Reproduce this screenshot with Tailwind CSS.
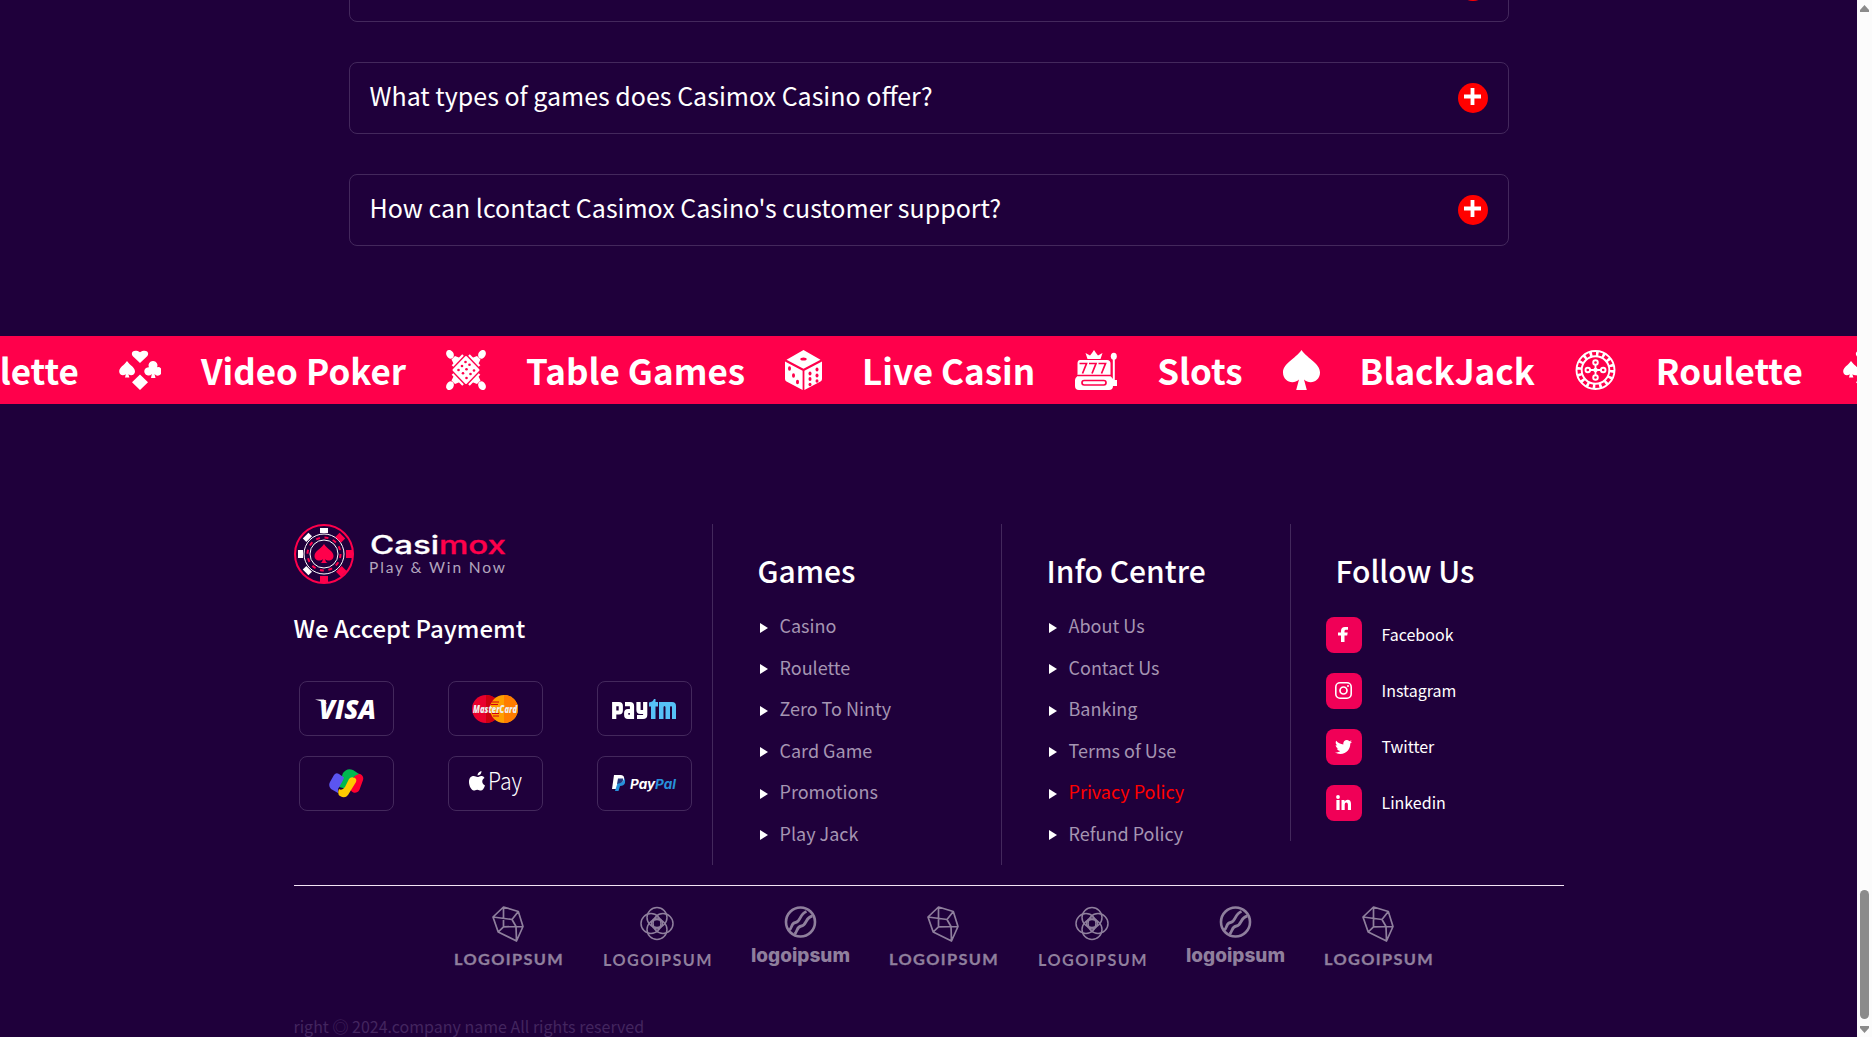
<!DOCTYPE html>
<html lang="en"><head><meta charset="utf-8"><title>Casimox</title>
<script src="https://cdn.jsdelivr.net/npm/@tailwindcss/browser@4"></script></head>
<body class="h-[1037px] w-[1872px] overflow-hidden bg-[#1f003b] font-['Noto_Sans_CJK_JP',sans-serif] text-white">

<svg class="hidden" aria-hidden="true">
  <symbol id="cards" viewBox="0 0 42 40">
    <path d="M21 13 13.600 6C11 2 15.500-1.500 21 2.200 26.500-1.500 31 2 28.400 6ZM21 24.500 29 32.300 21 40 13 32.300ZM8 11C5 15.500.2 17.200.2 21.500.2 25 4 26.500 6.800 24.200L6 27.500H10.400L9.400 24.200C12 26.500 16 25 16 21.500 16 17.200 11 15.500 8 11ZM34 11a4.300 4.300 0 0 0-4 6.200A4.200 4.200 0 1 0 32.800 24L32 28H36.500L35.500 24A4.200 4.200 0 1 0 38 17.200 4.300 4.300 0 0 0 34 11Z"/>
  </symbol>
  <symbol id="tablegames" viewBox="0 0 40 40">
    <path d="M20 7 32.500 20 20 33 7.500 20Z" stroke="#fff" stroke-width="2" stroke-linejoin="round"/>
    <g id="tg"><ellipse cx="4" cy="4.300" rx="3.600" ry="4.600" transform="rotate(-30 4 4.300)"/><path d="m5.500 9.500 3.500-3.500 5 2-6 6.500Z"/><path d="M17 5 6.500 16" stroke="#fff" stroke-width="2.200" fill="none"/></g>
    <use href="#tg" transform="matrix(-1 0 0 1 40 0)"/><use href="#tg" transform="matrix(1 0 0 -1 0 40)"/><use href="#tg" transform="rotate(180 20 20)"/>
    <g fill="#ff004b"><circle cx="19.500" cy="12" r="1.300"/><circle cx="23.500" cy="14.800" r="1.300"/><circle cx="16" cy="16" r="1.300"/><circle cx="20.500" cy="19.200" r="1.300"/><circle cx="12.500" cy="20" r="1.300"/><circle cx="17" cy="23.200" r="1.300"/><circle cx="28" cy="20.500" r="1.300"/><circle cx="24.500" cy="24" r="1.300"/><circle cx="20.500" cy="28" r="1.300"/></g>
  </symbol>
  <symbol id="dice" viewBox="0 0 37 40">
    <path d="M18.500 0 35.500 9.700 18.500 18.800 1.500 9.700ZM0 11.500 17.600 20.800V40L1.500 31.500Q0 30.500 0 29ZM37 11.500 19.400 20.800V40L35.500 31.500Q37 30.500 37 29Z"/>
    <g fill="#ff004b"><ellipse cx="18.500" cy="9" rx="3.200" ry="1.600"/><ellipse cx="4.500" cy="18.500" rx="1.500" ry="2.200"/><ellipse cx="8.500" cy="25.500" rx="1.500" ry="2.200"/><ellipse cx="12.500" cy="32" rx="1.500" ry="2.200"/><ellipse cx="25" cy="23.500" rx="1.500" ry="2"/><ellipse cx="32" cy="19.500" rx="1.500" ry="2"/><ellipse cx="25" cy="29" rx="1.500" ry="2"/><ellipse cx="32" cy="25.500" rx="1.500" ry="2"/><ellipse cx="25" cy="34.500" rx="1.500" ry="1.800"/><ellipse cx="32" cy="31" rx="1.500" ry="1.800"/></g>
  </symbol>
  <symbol id="slot" viewBox="0 0 42 40">
    <path d="M10.500 3 15 5.500 17 3 19 0 21 3 23 5.500 27.500 3 25.500 9H12.500ZM5 10H32Q35.500 10 35.500 13.500V25H2.500V13.500Q2.500 10 5 10ZM2.500 26H35.500L38 29V30H42V36H38Q38 40 34 40H4Q0 40 0 36V30Q0 28 2.500 26Z"/>
    <ellipse cx="38.800" cy="6.200" rx="3" ry="3.500"/><path d="M37.800 9H39.800V31H37.800Z"/>
    <g fill="none" stroke="#ff004b" stroke-width="1.700"><path d="M4.500 13.500H11.500L7.500 23.500M14 13.500H21L17 23.500M23.500 13.500H30.500L26.500 23.500M2.500 25.500H36"/><rect x="7" y="30.500" width="24" height="4.500" rx="2.200"/></g>
  </symbol>
  <symbol id="spade" viewBox="0 0 37 40"><path d="M18.500 0C12 9 0 13.500 0 22.500 0 31.500 10 35 16 29.500L13.200 40H23.800L21 29.500C27 35 37 31.500 37 22.500 37 13.500 25 9 18.500 0Z"/></symbol>
  <symbol id="wheel" viewBox="0 0 41 40">
    <g fill="none" stroke="#fff"><circle cx="20.500" cy="20" r="19" stroke-width="1.900"/><circle cx="20.500" cy="20" r="13.800" stroke-width="1.900"/><circle cx="20.500" cy="20" r="16.500" stroke-width="5" stroke-dasharray="2.600 3.880"/><path d="M20.500 14V26M14.500 20H26.500" stroke-width="1.800"/><g stroke-width="1.900"><circle cx="20.500" cy="12.500" r="2.300"/><circle cx="20.500" cy="27.500" r="2.300"/><circle cx="12.800" cy="20" r="2.300"/><circle cx="28.200" cy="20" r="2.300"/></g></g><circle cx="20.500" cy="20" r="2.200"/>
  </symbol>
  <symbol id="gem" viewBox="0 0 32 36"><path d="M11.500 1 26.300 5.500 31 20.500 24.500 35 6.200 26 1 11ZM11.500 1V20.800L6.200 26M1 11 20 13.500 26.300 5.500M20 13.500 24 20.500M11.500 20.800 31 20.500M24 20.500 24.500 35" fill="none" stroke="currentColor" stroke-width="1.700" stroke-linejoin="round"/></symbol>
  <symbol id="rings" viewBox="0 0 34 34"><g fill="none" stroke="currentColor" stroke-width="1.500"><circle cx="17" cy="11" r="10"/><circle cx="17" cy="23" r="10"/><circle cx="11" cy="17" r="10"/><circle cx="23" cy="17" r="10"/><circle cx="17" cy="17" r="5.500"/></g></symbol>
  <symbol id="globe" viewBox="0 0 32 32"><g fill="none" stroke="currentColor"><circle cx="16" cy="16" r="14.500" stroke-width="2.600"/><path d="M4.500 24C8 23 6 17 11 16.500S15 8 22 5.500M10 28C13 26 12 20.500 17 20S21 11 28 10" stroke-width="2.800"/></g></symbol>
</svg>

<div class="flex h-full">
<main class="flex h-full w-[1857px] shrink-0 flex-col overflow-hidden">

  <section class="mx-auto -mt-[50px] flex w-[1160px] shrink-0 flex-col gap-10 text-[25px] leading-[36px]">
    <div class="flex h-[72px] items-center justify-end rounded-lg border border-[#43285c] px-5"><span class="size-[30px] rounded-full bg-[#f00]"></span></div>
    <div class="flex h-[72px] items-center justify-between rounded-lg border border-[#43285c] px-5"><h3 class="-mt-1.5">What types of games does Casimox Casino offer?</h3><span class="flex size-[30px] justify-center rounded-full bg-[#f00] pt-[5px]"><svg class="size-[17px]" viewBox="0 0 17 17"><path d="M8.500 0V17M0 8.500H17" stroke="#fff" stroke-width="3.800"/></svg></span></div>
    <div class="flex h-[72px] items-center justify-between rounded-lg border border-[#43285c] px-5"><h3 class="-mt-1.5">How can lcontact Casimox Casino's customer support?</h3><span class="flex size-[30px] justify-center rounded-full bg-[#f00] pt-[5px]"><svg class="size-[17px]" viewBox="0 0 17 17"><path d="M8.500 0V17M0 8.500H17" stroke="#fff" stroke-width="3.800"/></svg></span></div>
  </section>

  <section class="mt-[90px] h-[68px] shrink-0 overflow-hidden bg-[#ff004b]">
    <div class="-ml-[68px] flex h-full w-max items-center gap-10 fill-white text-[35px] leading-[68px] font-bold">
      <span>Roulette</span><svg class="h-10 w-[42px]"><use href="#cards"/></svg>
      <span>Video Poker</span><svg class="size-10"><use href="#tablegames"/></svg>
      <span>Table Games</span><svg class="h-10 w-[37px]"><use href="#dice"/></svg>
      <span>Live Casin</span><svg class="h-10 w-[42px]"><use href="#slot"/></svg>
      <span>Slots</span><svg class="h-10 w-[37px]"><use href="#spade"/></svg>
      <span>BlackJack</span><svg class="h-10 w-[41px]"><use href="#wheel"/></svg>
      <span>Roulette</span><svg class="h-10 w-[42px]"><use href="#cards"/></svg>
    </div>
  </section>

  <footer class="mx-auto mt-[120px] w-[1270px] shrink-0">
    <div class="flex h-[341px] items-start">
      <div class="h-[341px] w-[419px] border-r border-[#43285c]">
        <div class="flex items-center gap-[15px]">
          <svg class="size-[60px]" viewBox="0 0 60 60"><g fill="none"><circle cx="30" cy="30" r="29" stroke="#ff004b" stroke-width="2"/><circle cx="30" cy="30" r="20" stroke="#fff"/><circle cx="30" cy="30" r="16.500" stroke="#ff004b" stroke-width="2" stroke-dasharray="4 4.640"/><circle cx="30" cy="30" r="14" stroke="#fff"/></g>
            <g fill="#fff"><path d="M26 4h8v5h-8zM4 26h5v8h-5z"/><path d="M26 4h8v5h-8z" transform="rotate(-45 30 30)"/><path d="M26 4h8v5h-8z" transform="rotate(-135 30 30)"/></g>
            <g fill="#ff004b"><path d="M26 4h8v6h-8z" transform="rotate(45 30 30)"/><path d="M26 1h8v7h-8z" transform="rotate(90 30 30)"/><path d="M26 2h8v7h-8z" transform="rotate(135 30 30)"/><path d="M26 1h8v7h-8z" transform="rotate(180 30 30)"/><path d="M30 20C27 25 20.500 27 20.500 32 20.500 36.500 26 38 29 35L28 38 26.500 39H33.500L32 38 31 35C34 38 39.500 36.500 39.500 32 39.500 27 33 25 30 20Z"/></g></svg>
          <svg class="h-[60px] w-[140px] overflow-visible" font-family="Inter, sans-serif"><text x="1" y="29.500" font-size="25" font-weight="500" fill="#fff" stroke="#fff" stroke-width=".3" textLength="136" lengthAdjust="spacingAndGlyphs">Casi<tspan fill="#ff004b" stroke="#ff004b">mox</tspan></text><text x="0" y="49" font-family="Lato, sans-serif" font-size="15.500" fill="#b3a6be" textLength="136">Play &amp; Win Now</text></svg>
        </div>
        <h4 class="mt-[26px] text-[24px] leading-[36px] font-medium">We Accept Paymemt</h4>
        <div class="mt-[35px] ml-[5px] grid w-max grid-cols-[95px_95px_95px] gap-x-[54px] gap-y-5">
          <div class="flex h-[55px] items-center justify-center rounded-lg border border-[#43285c]"><svg class="h-5 w-[62px] overflow-visible" viewBox="0 0 62 20" font-family="Open Sans, sans-serif"><text x="4" y="19.500" font-size="26" font-weight="800" font-style="italic" fill="#fff" textLength="57" lengthAdjust="spacingAndGlyphs">VISA</text><path d="M0 .5H9L12 5 8 3Z" fill="#fff"/></svg></div>
          <div class="flex h-[55px] items-center justify-center rounded-lg border border-[#43285c]"><svg class="h-7 w-[46px]" viewBox="0 0 46 28"><circle cx="14" cy="14" r="14" fill="#e9002c"/><path d="M14 0A14 14 0 0 1 14 28Z" fill="#cc0010"/><circle cx="32" cy="14" r="14" fill="#ff9f00"/><path d="M32 0A14 14 0 0 1 32 28Z" fill="#ff7d00"/><path d="M20 7H27M19 9.500H26M20 18.500H27M21 21H27" stroke="#d20011"/><text x="1" y="18" font-family="Open Sans, sans-serif" font-size="10" font-weight="800" font-style="italic" fill="#eee" textLength="44" lengthAdjust="spacingAndGlyphs">MasterCard</text></svg></div>
          <div class="flex h-[55px] items-center justify-center rounded-lg border border-[#43285c]"><svg class="h-5 w-16 overflow-visible" viewBox="0 0 64 20"><g fill="none" stroke="#fff" stroke-width="4.200"><path d="M2.200 20V5.200H7Q8.800 5.200 8.800 7V11.500Q8.800 13.500 7 13.500H3"/><path d="M13 5.200H18Q20 5.200 20 7V17.800H16Q14.200 17.800 14.200 16V14Q14.200 12 16 12H20"/><path d="M26.500 3V11Q26.500 13 28.500 13H33M33.200 3V16Q33.200 18 31 18H25"/></g><path d="M37 3.500Q41 3 42 0H43.500V3H46V7.500H43.500V20H39V7.500H37ZM47 3H60Q64 3 64 7V20H60V8.500Q60 7 59 7T58 8.500V20H53.500V8.500Q53.500 7 52.500 7T51.500 8.500V20H47Z" fill="#56c1f7"/></svg></div>
          <div class="flex h-[55px] items-center justify-center rounded-lg border border-[#43285c]"><svg class="h-[29px] w-[35px]" viewBox="0 0 35 29"><path d="M29.500 9.500 26 19" fill="none" stroke="#ff0030" stroke-width="9.500" stroke-linecap="round"/><path d="M11 12 14 4Q18-1.500 24 1L30 5Q26 6 24 9L18 20 10 18Z" fill="#00b84f"/><path d="M20 10Q22 7 26 9 28 10 27 13L19 26Q16 30 11 27 8 25 10 20 13 22 16 18Z" fill="#ffca00"/><path d="M5 6Q7 3 10 5L15 8.500Q14 12 9 20L9 24 2 20Q-1 17 1 13Z" fill="#5b55f0"/></svg></div>
          <div class="flex h-[55px] items-center justify-center rounded-lg border border-[#43285c]"><svg class="h-7 w-[53px] overflow-visible" viewBox="0 0 53 28"><path d="M12.500 1Q12.500 5 8.500 5.500 8.500 2 12.500 1ZM8.500 7C10 7 11 5.500 13 6Q15 6.500 15.500 8C12 10 13 14 16 15.500 15 18.500 13.500 20.500 11.800 20.500 10.500 20.500 10 19.700 8.200 19.700S6 20.500 4.800 20.500C2.500 20.500 0 16 0 12 0 7.500 2.500 6 4.700 6 6.500 6 7 7 8.500 7Z" fill="#fff"/><text x="19" y="20" font-family="Noto Sans CJK JP" font-weight="300" font-size="24" fill="#fff" textLength="34" lengthAdjust="spacingAndGlyphs">Pay</text></svg></div>
          <div class="flex h-[55px] items-center justify-center rounded-lg border border-[#43285c]"><svg class="h-[17px] w-16 overflow-visible" viewBox="0 0 64 17"><path d="M2 0H9Q13 .5 12 5 11 9 6.500 9L5 14H0Z" fill="#fff"/><path d="M12 3Q14 5 13 8 12 11 8 11L6.500 16H3L5.500 8Q12 8 12 3Z" fill="#2790da"/><path d="M6 3.500H11Q11.500 8 6.500 8.500L5 9Z" fill="#24367c"/><text x="18" y="13.500" font-family="Inter, sans-serif" font-size="13" font-weight="700" font-style="italic" fill="#fff" textLength="46" lengthAdjust="spacingAndGlyphs">Pay<tspan fill="#2790da">Pal</tspan></text></svg></div>
        </div>
      </div>

      <div class="h-[341px] w-[289px] border-r border-[#43285c] pt-6 pl-[45px]">
        <h3 class="text-[30px] leading-[45px] font-medium">Games</h3>
        <ul class="mt-[12px] text-[18px] leading-[41.500px] text-[#a595b2]">
          <li class="flex items-center gap-3 before:mt-[4px] before:ml-[2px] before:border-y-[5px] before:border-l-8 before:border-y-transparent before:border-l-white">Casino</li>
          <li class="flex items-center gap-3 before:mt-[4px] before:ml-[2px] before:border-y-[5px] before:border-l-8 before:border-y-transparent before:border-l-white">Roulette</li>
          <li class="flex items-center gap-3 before:mt-[4px] before:ml-[2px] before:border-y-[5px] before:border-l-8 before:border-y-transparent before:border-l-white">Zero To Ninty</li>
          <li class="flex items-center gap-3 before:mt-[4px] before:ml-[2px] before:border-y-[5px] before:border-l-8 before:border-y-transparent before:border-l-white">Card Game</li>
          <li class="flex items-center gap-3 before:mt-[4px] before:ml-[2px] before:border-y-[5px] before:border-l-8 before:border-y-transparent before:border-l-white">Promotions</li>
          <li class="flex items-center gap-3 before:mt-[4px] before:ml-[2px] before:border-y-[5px] before:border-l-8 before:border-y-transparent before:border-l-white">Play Jack</li>
        </ul>
      </div>

      <div class="h-[341px] w-[289px] pt-6 pl-[45px]">
        <h3 class="text-[30px] leading-[45px] font-medium">Info Centre</h3>
        <ul class="mt-[12px] text-[18px] leading-[41.500px] text-[#a595b2]">
          <li class="flex items-center gap-3 before:mt-[4px] before:ml-[2px] before:border-y-[5px] before:border-l-8 before:border-y-transparent before:border-l-white">About Us</li>
          <li class="flex items-center gap-3 before:mt-[4px] before:ml-[2px] before:border-y-[5px] before:border-l-8 before:border-y-transparent before:border-l-white">Contact Us</li>
          <li class="flex items-center gap-3 before:mt-[4px] before:ml-[2px] before:border-y-[5px] before:border-l-8 before:border-y-transparent before:border-l-white">Banking</li>
          <li class="flex items-center gap-3 before:mt-[4px] before:ml-[2px] before:border-y-[5px] before:border-l-8 before:border-y-transparent before:border-l-white">Terms of Use</li>
          <li class="flex items-center gap-3 text-[#f00] before:mt-[4px] before:ml-[2px] before:border-y-[5px] before:border-l-8 before:border-y-transparent before:border-l-white">Privacy Policy</li>
          <li class="flex items-center gap-3 before:mt-[4px] before:ml-[2px] before:border-y-[5px] before:border-l-8 before:border-y-transparent before:border-l-white">Refund Policy</li>
        </ul>
      </div>

      <div class="-ml-px h-[317px] flex-1 border-l border-[#43285c] pt-6">
        <h3 class="ml-[45px] text-[30px] leading-[45px] font-medium">Follow Us</h3>
        <ul class="mt-6 ml-[35px] flex flex-col gap-5 text-[16px] leading-[24px]">
          <li class="flex items-center gap-5"><span class="flex size-9 items-center justify-center rounded-lg bg-[#f00057]"><svg class="-mt-px -ml-[2px] h-[15px] w-[10px]" viewBox="0 0 10 15"><path d="M3 15V8.500H0V5.500H3V4Q3 0 7 0H10V2.800H8Q6.500 2.800 6.500 4.200V5.500H9.700L9.200 8.500H6.500V15Z" fill="#fff"/></svg></span><span class="-mt-[3px]">Facebook</span></li>
          <li class="flex items-center gap-5"><span class="flex size-9 items-center justify-center rounded-lg bg-[#f00057]"><svg class="-mt-px -ml-px size-[17px]" viewBox="0 0 17 17" fill="none" stroke="#fff"><rect x=".8" y=".8" width="15.400" height="15.400" rx="4.200" stroke-width="1.600"/><circle cx="8.500" cy="8.500" r="3.500" stroke-width="1.700"/><circle cx="13" cy="4" r="1" fill="#fff" stroke="none"/></svg></span><span class="-mt-[3px]">Instagram</span></li>
          <li class="flex items-center gap-5"><span class="flex size-9 items-center justify-center rounded-lg bg-[#f00057]"><svg class="-mt-px -ml-px h-[14px] w-[17px]" viewBox="0 48 512 416"><path fill="#fff" d="M459.370 151.716c.325 4.548.325 9.097.325 13.645 0 138.720-105.583 298.558-298.558 298.558-59.452 0-114.680-17.219-161.137-47.106 8.447.974 16.568 1.299 25.340 1.299 49.055 0 94.213-16.568 130.274-44.832-46.132-.975-84.792-31.188-98.112-72.772 6.498.974 12.995 1.624 19.818 1.624 9.421 0 18.843-1.300 27.614-3.573-48.081-9.747-84.143-51.980-84.143-102.985v-1.299c13.969 7.797 30.214 12.670 47.431 13.319-28.264-18.843-46.781-51.005-46.781-87.391 0-19.492 5.197-37.360 14.294-52.954 51.655 63.675 129.300 105.258 216.365 109.807-1.624-7.797-2.599-15.918-2.599-24.040 0-57.828 46.782-104.934 104.934-104.934 30.213 0 57.502 12.670 76.670 33.137 23.715-4.548 46.456-13.320 66.599-25.340-7.798 24.366-24.366 44.833-46.132 57.827 21.117-2.273 41.584-8.122 60.426-16.243-14.292 20.791-32.161 39.308-52.628 54.253z"/></svg></span><span class="-mt-[3px]">Twitter</span></li>
          <li class="flex items-center gap-5"><span class="flex size-9 items-center justify-center rounded-lg bg-[#f00057]"><svg class="-mt-px -ml-px size-[15px]" viewBox="0 0 15 15" fill="#fff"><circle cx="2" cy="2" r="1.900"/><path d="M.4 5H3.600V15H.4ZM5.500 5H8.500V6.500Q9.500 4.700 11.700 4.700 15 4.700 15 9V15H11.900V9.600Q11.900 7.500 10.300 7.500 8.700 7.500 8.700 9.600V15H5.500Z"/></svg></span><span class="-mt-[3px]">Linkedin</span></li>
        </ul>
      </div>
    </div>

    <div class="mt-5 h-px w-full bg-[#f3e3f5]"></div>
    <div class="mt-[19px] ml-[160px] flex h-[64px] gap-[35px] text-[#8f7f9d]">
      <svg class="h-16 w-[110px]"><use href="#gem" x="38" y="1" width="32" height="36"/><text x="0" y="60" font-family="Lato, sans-serif" font-weight="700" font-size="14.500" letter-spacing="1.200" fill="currentColor" stroke="currentColor" stroke-width=".3" textLength="110" lengthAdjust="spacingAndGlyphs">LOGOIPSUM</text></svg>
      <svg class="h-16 w-[113px]"><use href="#rings" x="41" y="1" width="34" height="35"/><text x="4" y="61" font-family="Lato, sans-serif" font-weight="700" font-size="17" fill="currentColor" textLength="110" lengthAdjust="spacingAndGlyphs" letter-spacing="1.500">LOGOIPSUM</text></svg>
      <svg class="-ml-[3px] h-16 w-[110px]"><use href="#globe" x="40" y="1" width="33" height="32"/><text x="7" y="57" font-family="Inter, sans-serif" font-weight="800" font-size="19" fill="currentColor" textLength="99" lengthAdjust="spacingAndGlyphs">logoipsum</text></svg>
      <svg class="h-16 w-[110px]"><use href="#gem" x="38" y="1" width="32" height="36"/><text x="0" y="60" font-family="Lato, sans-serif" font-weight="700" font-size="14.500" letter-spacing="1.200" fill="currentColor" stroke="currentColor" stroke-width=".3" textLength="110" lengthAdjust="spacingAndGlyphs">LOGOIPSUM</text></svg>
      <svg class="h-16 w-[113px]"><use href="#rings" x="41" y="1" width="34" height="35"/><text x="4" y="61" font-family="Lato, sans-serif" font-weight="700" font-size="17" fill="currentColor" textLength="110" lengthAdjust="spacingAndGlyphs" letter-spacing="1.500">LOGOIPSUM</text></svg>
      <svg class="-ml-[3px] h-16 w-[110px]"><use href="#globe" x="40" y="1" width="33" height="32"/><text x="7" y="57" font-family="Inter, sans-serif" font-weight="800" font-size="19" fill="currentColor" textLength="99" lengthAdjust="spacingAndGlyphs">logoipsum</text></svg>
      <svg class="h-16 w-[110px]"><use href="#gem" x="38" y="1" width="32" height="36"/><text x="0" y="60" font-family="Lato, sans-serif" font-weight="700" font-size="14.500" letter-spacing="1.200" fill="currentColor" stroke="currentColor" stroke-width=".3" textLength="110" lengthAdjust="spacingAndGlyphs">LOGOIPSUM</text></svg>
    </div>
    <p class="mt-[45px] text-[16px] leading-[24px] text-[#43255f]">right ◎ 2024.company name All rights reserved</p>
  </footer>
</main>

<aside class="flex h-full w-[15px] flex-col items-center bg-[#fcfcfc] pt-[5px]">
  <svg class="h-[7px] w-[9px] shrink-0" viewBox="0 0 9 7"><path d="M4.500 0 9 5V7H0V5Z" fill="#8b8b8b"/></svg>
  <div class="mt-[878px] h-[129px] w-[9px] shrink-0 rounded-full bg-[#8b8b8b]"></div>
  <svg class="mt-[7px] h-[7px] w-[9px] shrink-0" viewBox="0 0 9 7"><path d="M4.500 7 9 2V0H0V2Z" fill="#8b8b8b"/></svg>
</aside>
</div>
</body></html>
